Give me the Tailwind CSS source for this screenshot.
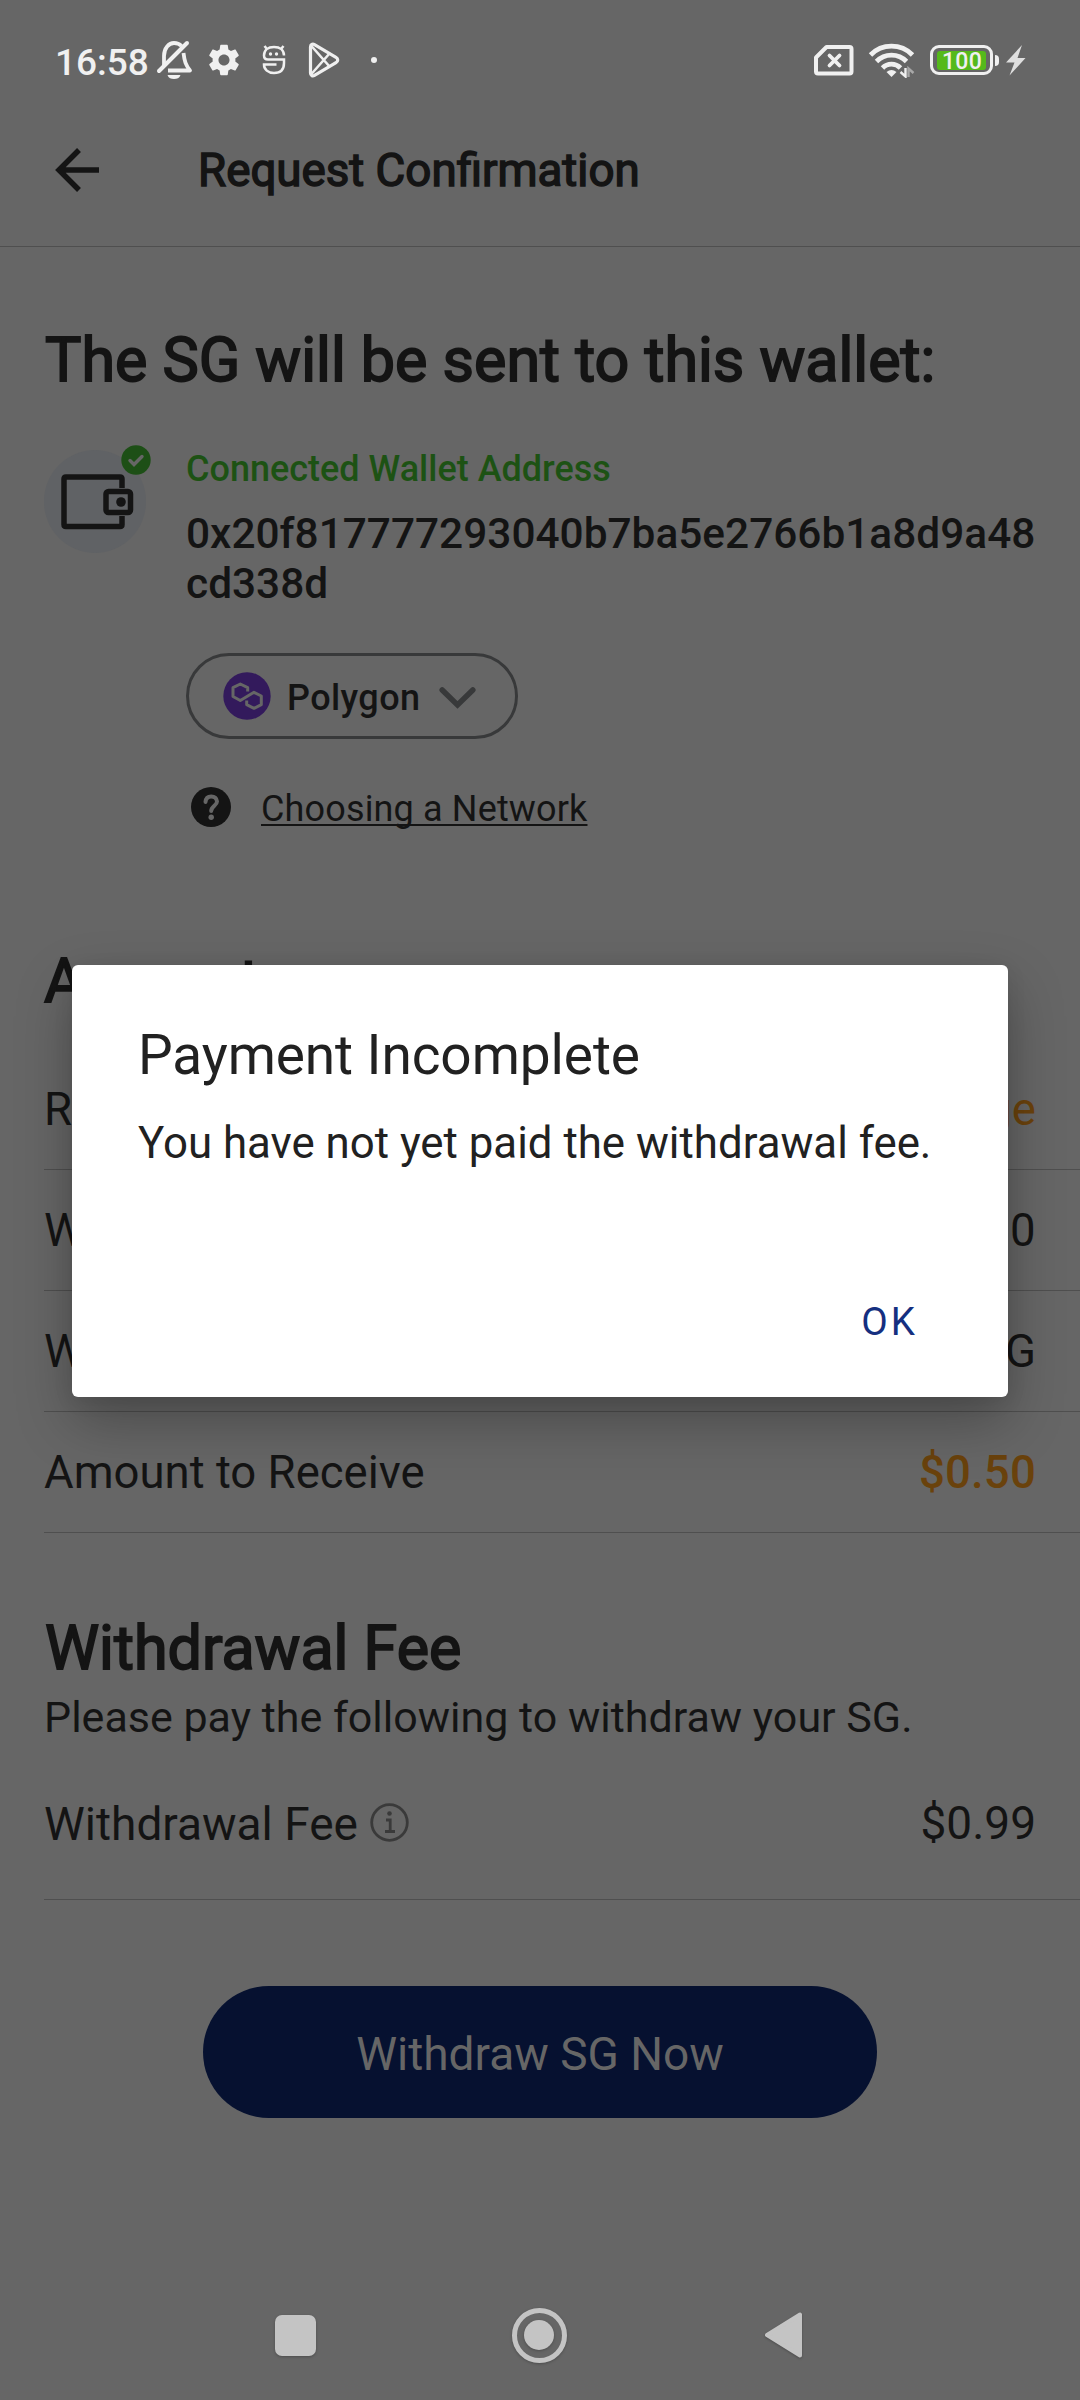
<!DOCTYPE html>
<html lang="en">
<head>
<meta charset="utf-8">
<title>Request Confirmation</title>
<script src="https://cdn.jsdelivr.net/npm/@tailwindcss/browser@4"></script>
</head>
<body class="bg-[#666666]">
<div class="relative flex h-[2400px] w-[1080px] flex-col overflow-hidden bg-[#666666] font-['Roboto',sans-serif] text-[#141414]">

  <!-- Status bar -->
  <div class="flex h-24 shrink-0 items-center justify-between pt-6 pl-[55px] pr-[54px] text-[#f0f0f0]">
    <div class="flex items-center">
      <span class="w-[100px] pt-1.5 text-[37px] leading-10 font-medium">16:58</span>
      <svg class="h-[42px] w-[38px]" viewBox="0 0 38 42" fill="none" stroke="#f0f0f0" stroke-width="3.8">
        <path d="M9 26V17C9 9 14 4 19 4C22 4 24.5 5 26.500 7M28.500 14C29.500 22 30.500 26 35 31.500H13" stroke-linejoin="round"/>
        <path d="M4 32L32 4" stroke-width="4" stroke-linecap="round"/>
        <path d="M12.500 36H25.500C24.500 39 22 40 19 40S13.500 39 12.500 36Z" fill="#f0f0f0" stroke="none"/>
      </svg>
      <svg class="ml-3 h-[38px] w-[38px]" viewBox="0 0 24 24" fill="#f0f0f0"><path d="M19.140 12.940c.040-.300.060-.610.060-.940 0-.320-.020-.640-.070-.940l2.030-1.580c.180-.140.230-.410.120-.610l-1.920-3.320c-.120-.220-.370-.290-.590-.220l-2.390.960c-.500-.380-1.030-.700-1.620-.940l-.360-2.540c-.040-.240-.240-.410-.480-.410h-3.840c-.240 0-.430.170-.470.410l-.360 2.540c-.590.240-1.130.570-1.620.940l-2.390-.960c-.220-.080-.470 0-.590.220L2.740 8.870c-.120.210-.080.470.120.610l2.030 1.580c-.050.300-.090.630-.090.940s.020.640.070.940l-2.030 1.580c-.180.140-.230.410-.120.610l1.920 3.320c.120.220.370.290.590.220l2.390-.960c.500.380 1.030.700 1.620.940l.360 2.540c.050.240.240.410.480.410h3.840c.240 0 .440-.170.470-.410l.360-2.540c.590-.240 1.130-.560 1.620-.940l2.390.960c.220.080.470 0 .590-.220l1.920-3.320c.120-.220.070-.470-.120-.610l-2.010-1.580zM12 15.500c-1.930 0-3.500-1.570-3.500-3.500s1.570-3.500 3.500-3.500 3.500 1.570 3.500 3.500-1.570 3.500-3.500 3.500z"/></svg>
      <svg class="ml-[19px] h-[32px] w-[24px]" viewBox="0 0 24 32" fill="none" stroke="#f0f0f0" stroke-width="2.500">
        <path d="M22 11.500C22 6 18 3 12 3S2 6 2 11.500C2 14.500 3.500 15.500 6 15.500H22V19C22 26 18 29 12 29S2 25.500 2 20.500H14.500M4.500 4.500L2.500 2M19.500 4.500L21.500 2"/>
        <circle cx="8.500" cy="10" r="1.700" fill="#f0f0f0" stroke="none"/><circle cx="14.500" cy="10" r="1.700" fill="#f0f0f0" stroke="none"/>
      </svg>
      <svg class="ml-[22px] h-[36px] w-[32px]" viewBox="0 0 32 36" fill="none" stroke="#f0f0f0" stroke-linejoin="round">
        <path d="M2.500 5C2.500 2.500 4.500 1.500 6.500 2.700L28 15.300C30.300 16.700 30.300 19.300 28 20.700L6.500 33.300C4.500 34.500 2.500 33.500 2.500 31Z" stroke-width="3.200"/>
        <path d="M3 3.500L21.500 24.500M3 32.500L21.500 11.500" stroke-width="2.600"/>
      </svg>
      <span class="ml-[31px] size-1.5 rounded-full bg-[#f0f0f0]"></span>
    </div>
    <div class="flex items-center">
      <svg class="h-[32px] w-[41px]" viewBox="0 0 41 32" fill="none" stroke="#f0f0f0" stroke-linejoin="round" stroke-linecap="round">
        <path d="M13.500 3H36.500Q38.500 3 38.500 5V27.500Q38.500 29.500 36.500 29.500H5Q3 29.500 3 27.500V13.500Z" stroke-width="4"/>
        <path d="M16.500 11.500L26.500 21.500M26.500 11.500L16.500 21.500" stroke-width="3.800"/>
      </svg>
      <svg class="ml-3.5 h-[36px] w-[48px]" viewBox="0 0 48 36" fill="none" stroke="#f0f0f0" stroke-width="4.800">
        <path d="M2.500 13A29.500 29.500 0 0 1 44.500 13M8.500 19.500A21 21 0 0 1 38.500 19.500M14.500 26A12.500 12.500 0 0 1 32.500 26"/>
        <path d="M23.500 35L18.500 30Q23.500 26 28.500 30Z" fill="#f0f0f0" stroke="none"/>
        <path d="M37.500 26V34.500L32.500 30" stroke-width="2.400"/>
        <path d="M40.500 35V26.500L45.500 31" stroke="#a8a8a8" stroke-width="2.400"/>
      </svg>
      <div class="ml-3.5 flex h-[30px] w-[63px] items-center justify-center rounded-[9px] border-3 border-[#f0f0f0]">
        <span class="h-[19px] w-[49px] rounded-[3px] bg-[#55b91b] pl-px text-center text-[23px] leading-[21px] font-medium tracking-[0.3px]">100</span>
      </div>
      <span class="ml-0.5 h-[11px] w-1 rounded-r-sm bg-[#f0f0f0]"></span>
      <svg class="ml-[7px] h-[31px] w-5" viewBox="0 0 20 31" fill="#dedede"><path d="M16 0L0 17.500H8.500L3.500 30.500L19.500 13H11.500Z"/></svg>
    </div>
  </div>

  <!-- App bar -->
  <div class="flex h-[151px] shrink-0 items-center border-b border-[#4f4f4f] pl-[55px]">
    <svg class="-mt-0.5 h-[46px] w-[45px]" viewBox="0 0 45 46" fill="none" stroke="#141414" stroke-width="5.500"><path d="M24 3L4 23L24 43M4 23H44"/></svg>
    <h1 class="ml-[98px] text-[45.700px] leading-[56px] [-webkit-text-stroke:1.500px_#141414]">Request Confirmation</h1>
  </div>

  <!-- Content -->
  <div class="flex flex-col pt-[81px] pl-11">
    <h2 class="h-16 pl-px text-[61px] leading-16 whitespace-nowrap [-webkit-text-stroke:1.800px_#141414]">The SG will be sent to this wallet:</h2>

    <div class="mt-[58px] flex gap-10">
      <div class="relative size-[102px] h-[103px] shrink-0 rounded-full bg-[#606265]">
        <svg class="absolute top-6 left-[17px] h-[56px] w-[73px]" viewBox="0 0 73 56" fill="none" stroke="#141414" stroke-width="5.500">
          <path d="M61 14V5Q61 3 59 3H5Q3 3 3 5V50.500Q3 52.500 5 52.500H59Q61 52.500 61 50.500V42" />
          <rect x="45" y="17.500" width="24.500" height="21" rx="2.500"/>
          <circle cx="60" cy="28" r="4.800" fill="#141414" stroke="none"/>
        </svg>
        <svg class="absolute -top-[5px] left-[77px] size-[30px]" viewBox="0 0 30 30"><circle cx="15" cy="15" r="14.700" fill="#1d4f16"/><path d="M9 15.500L13 19.500L21 11.500" fill="none" stroke="#666" stroke-width="3.400" stroke-linecap="round"/></svg>
      </div>
      <div class="flex flex-col items-start">
        <p class="pt-px text-[36px] leading-[37px] font-medium text-[#1d5214]">Connected Wallet Address</p>
        <p class="mt-[21px] w-[860px] text-[42.400px] leading-[50px] font-medium break-all">0x20f817777293040b7ba5e2766b1a8d9a48<br>cd338d</p>
        <div class="mt-11 flex h-[86px] w-[332px] items-center rounded-full border-3 border-[#38393a] pl-[34px]">
          <svg class="size-[48px]" viewBox="0 0 48 48" fill="none" stroke="#666" stroke-width="3" stroke-linejoin="round">
            <circle cx="24" cy="24" r="23.700" fill="#331a5c" stroke="none"/>
            <path d="M24.700 19.500V15.700L17.300 12L10 15.700V24.500L17.300 28.500L31 20.300L38.300 24V32.700L31 36.300L23.700 32.700V28.500"/>
          </svg>
          <span class="ml-[16px] pt-[3px] text-[36px] leading-10 font-medium tracking-[0.4px]">Polygon</span>
          <svg class="mt-[3px] ml-[19px] h-6 w-[37px]" viewBox="0 0 37 24" fill="none" stroke="#38393a" stroke-width="5.500" stroke-linecap="round"><path d="M3.200 4L18.500 19L33.800 4"/></svg>
        </div>
        <div class="mt-12 flex h-[43px] pl-[5px]">
          <svg class="size-10" viewBox="0 0 40 40"><circle cx="20" cy="20" r="20" fill="#141414"/><path d="M14.500 15Q15 9.500 20.200 9.500T26 14.500C26 18.500 20.200 19 20.200 24" fill="none" stroke="#666" stroke-width="4" stroke-linecap="round"/><circle cx="20.200" cy="30.200" r="2.700" fill="#666"/></svg>
          <a class="ml-[30px] text-[36px] leading-[45px] tracking-[0.150px] underline decoration-2 underline-offset-3 [text-decoration-skip-ink:none]">Choosing a Network</a>
        </div>
      </div>
    </div>

    <h2 class="mt-[119px] h-16 text-[61px] leading-16 [-webkit-text-stroke:1.800px_#141414]">Amount</h2>
    <div class="mt-9 flex flex-col text-[45.500px] leading-[56px]">
      <div class="flex h-[121px] items-center justify-between border-b border-[#4f4f4f] pt-0.5 pr-11"><span>Receive Method</span><span class="text-[#6a420c]">Change</span></div>
      <div class="flex h-[121px] items-center justify-between border-b border-[#4f4f4f] pt-0.5 pr-11"><span>Withdrawal Amount</span><span class="tracking-[0.500px]">$0.50</span></div>
      <div class="flex h-[121px] items-center justify-between border-b border-[#4f4f4f] pt-0.5 pr-11"><span>Withdrawal in SG</span><span>50 SG</span></div>
      <div class="flex h-[121px] items-center justify-between border-b border-[#4f4f4f] pt-0.5 pr-11"><span>Amount to Receive</span><span class="font-medium tracking-[0.200px] text-[#6a420c]">$0.50</span></div>
    </div>

    <h2 class="mt-[83px] h-16 pl-px text-[61px] leading-16 [-webkit-text-stroke:1.800px_#141414]">Withdrawal Fee</h2>
    <p class="mt-3 text-[43px] leading-[50px]">Please pay the following to withdraw your SG.</p>
    <div class="mt-[7px] flex h-[151px] items-center justify-between border-b border-[#4f4f4f] pr-11">
      <div class="flex items-center gap-3">
        <span class="text-[46px] leading-[56px]">Withdrawal Fee</span>
        <svg class="-mt-1 size-[39px]" viewBox="0 0 39 39" fill="none" stroke="#3a3a3a" stroke-width="2.800"><circle cx="19.500" cy="19.500" r="17.800"/><path d="M16 17H20.200V28M15 28.500H25"/><circle cx="19.500" cy="10.500" r="2.300" fill="#3a3a3a" stroke="none"/></svg>
      </div>
      <span class="pb-[3px] text-[46px] leading-[56px]">$0.99</span>
    </div>
  </div>

  <div class="mt-[86px] flex h-[132px] w-[674px] shrink-0 items-center justify-center self-center rounded-full bg-[#061130] pt-1 text-[46px] text-[#666666]">Withdraw SG Now</div>

  <!-- Navigation bar -->
  <div class="mt-auto flex h-[130px] shrink-0 items-center justify-between pr-[278px] pl-[275px]">
    <span class="size-[41px] rounded-[7px] bg-[#c4c4c4] shadow-[0_1px_3px_rgba(0,0,0,0.250)]"></span>
    <div class="mr-0.5 flex size-[55px] items-center justify-center rounded-full border-5 border-[#c4c4c4] shadow-[0_1px_3px_rgba(0,0,0,0.250)]"><span class="size-[30px] rounded-full bg-[#c4c4c4] shadow-[0_1px_3px_rgba(0,0,0,0.250)]"></span></div>
    <svg class="h-[48px] w-[38px] drop-shadow-[0_1px_1px_rgba(0,0,0,0.250)]" viewBox="0 0 38 48" fill="#c4c4c4" stroke="#c4c4c4" stroke-width="4" stroke-linejoin="round"><path d="M3 24L36 3.500V44.500Z"/></svg>
  </div>

  <!-- Dialog -->
  <div class="absolute top-[965px] left-[72px] flex h-[432px] w-[936px] flex-col rounded-md bg-white pt-[58px] pl-[66px] text-[#212121] shadow-[0_24px_56px_rgba(0,0,0,0.280),0_4px_20px_rgba(0,0,0,0.080)]">
    <div class="text-[55px] leading-16 tracking-[-0.100px]">Payment Incomplete</div>
    <div class="mt-[31px] text-[43.800px] leading-[50px]">You have not yet paid the withdrawal fee.</div>
    <div class="mt-[134px] self-end pr-[90px] text-[38.500px] leading-10 tracking-[3px] text-[#152f80]">OK</div>
  </div>
</div>
</body>
</html>
